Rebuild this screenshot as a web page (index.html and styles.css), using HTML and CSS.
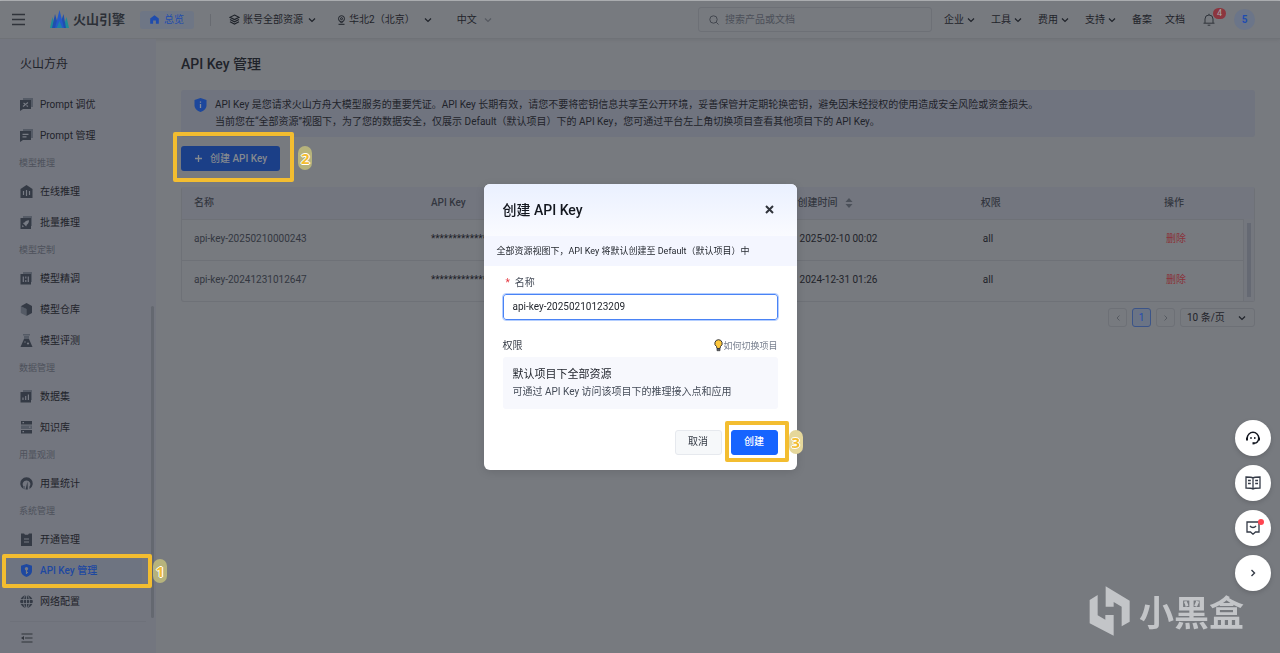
FILE: index.html
```html
<!DOCTYPE html>
<html lang="zh-CN">
<head>
<meta charset="utf-8">
<meta name="viewport" content="width=device-width, initial-scale=1">
<title>API Key 管理 - 火山方舟</title>
<link rel="stylesheet" href="styles.css">
</head>
<body>
<svg class="sprite" aria-hidden="true">
  <symbol id="down" viewBox="0 0 8 8"><path d="M1 2.500 4 5.500 7 2.500" fill="none" stroke="currentColor" stroke-width="1.200"/></symbol>
</svg>
<div class="app">
  <header class="topbar">
    <button class="icon-btn menu-btn" aria-label="菜单"><svg width="13" height="13" viewBox="0 0 13 13"><path d="M0 1.500h13M0 6.500h13M0 11.500h13" stroke="currentColor" stroke-width="1.300"/></svg></button>
    <a class="brand" href="#"><svg width="19" height="19" viewBox="0 0 19 19"><path d="M0 18 2.500 7l3 11z" fill="#1d8c98"/><path d="M13 18l3.500-11L19 18z" fill="#1d8c98"/><path d="M2 18 5 4l4 14z" fill="#1f4fae"/><path d="M9 18l4.500-14L16 18z" fill="#1f4fae"/><path d="M5 18 9.500 0 14 18z" fill="#2559c8"/><path d="M6.500 18l3-7 3 7z" fill="#1d7fa8"/></svg><span>火山引擎</span></a>
    <a class="overview" href="#"><svg width="9" height="9" viewBox="0 0 9 9"><path d="M4.500.2 8.800 3.600V8.800H5.900V5.500H3.100V8.800H.2V3.600z" fill="currentColor"/></svg>总览</a>
    <span class="sep"></span>
    <button class="drop scope"><svg width="11" height="11" viewBox="0 0 11 11" fill="none" stroke="currentColor" stroke-width="1.100"><path d="M5.500 1 10 3.300 5.500 5.600 1 3.300zM1 5.500l4.500 2.300L10 5.500M1 7.800l4.500 2.300L10 7.800"/></svg>账号全部资源<svg class="chev" width="8" height="8"><use href="#down"/></svg></button>
    <button class="drop region"><svg width="9" height="10" viewBox="0 0 9 10" fill="none" stroke="currentColor"><circle cx="4.500" cy="3.700" r="3"/><circle cx="4.500" cy="3.700" r="1"/><path d="M3 6.500l1.500 1.600L6 6.500M1.500 9.300h6"/></svg>华北2（北京）<svg class="chev" width="8" height="8"><use href="#down"/></svg></button>
    <button class="drop lang">中文<svg class="chev" width="8" height="8"><use href="#down"/></svg></button>
    <label class="search"><svg width="10" height="10" viewBox="0 0 10 10" fill="none" stroke="currentColor"><circle cx="4.500" cy="4.500" r="3.700"/><path d="M7.300 7.300 9.500 9.500"/></svg><input type="search" placeholder="搜索产品或文档" aria-label="搜索产品或文档"></label>
    <nav class="topnav" aria-label="顶部导航">
      <button class="drop">企业<svg width="8" height="8"><use href="#down"/></svg></button>
      <button class="drop">工具<svg width="8" height="8"><use href="#down"/></svg></button>
      <button class="drop">费用<svg width="8" height="8"><use href="#down"/></svg></button>
      <button class="drop">支持<svg width="8" height="8"><use href="#down"/></svg></button>
      <a href="#">备案</a>
      <a class="docs" href="#">文档</a>
    </nav>
    <button class="icon-btn bell" aria-label="消息"><svg width="12" height="13" viewBox="0 0 12 13" fill="none" stroke="currentColor"><path d="M.5 10.200h11M2 10V6a4 4 0 0 1 8 0v4M6 2V.8M4.700 12.200h2.600"/></svg><span class="count">4</span></button>
    <button class="avatar">5</button>
  </header>

  <div class="body">
    <aside class="sidebar">
      <h2 class="product">火山方舟</h2>
      <nav class="menu" aria-label="产品导航">
        <a class="item" href="#"><svg viewBox="0 0 13 13"><path class="soft" d="M3 0h10v9H3z"/><path d="M0 2h11v9H3l-3 2z"/><path class="cut" d="M3 8.500 8 4.500M3.500 5l1.500 1M6.500 7.500 8 8.500"/></svg>Prompt 调优</a>
        <a class="item" href="#"><svg viewBox="0 0 13 13"><path class="soft" d="M3 0h10v9H3z"/><path d="M0 2h11v9H3l-3 2z"/><path class="cut" d="M2.500 5.300h6M2.500 7.800h4"/></svg>Prompt 管理</a>
        <h3 class="group">模型推理</h3>
        <a class="item" href="#"><svg viewBox="0 0 13 13"><path d="M6.500 0 12.500 4v9H.5V4z"/><path class="cut" d="M3.500 6v4M6.500 5v6M9.500 6v4"/></svg>在线推理</a>
        <a class="item" href="#"><svg viewBox="0 0 13 13"><path class="soft" d="M3 0h9v10H3z"/><path d="M.5 2h10.500v11H.5z"/><path class="hole" d="M9 4.200c-2.500 0-4 1-4.500 2.300l-1.700.5 3.400 3.400.6-1.700C8.200 8 9 6.500 9 4.200zM2.500 9l1.500 1.500-2 .7z"/></svg>批量推理</a>
        <h3 class="group">模型定制</h3>
        <a class="item" href="#"><svg viewBox="0 0 13 13"><path class="soft" d="M3 0h9v10H3z"/><path d="M.5 2h10.500v10.500H.5z"/><path class="cut" d="M3.300 4.500v5.500M8.300 4.500v5.500M5.800 4.500v2M5.800 8v2"/></svg>模型精调</a>
        <a class="item" href="#"><svg viewBox="0 0 13 13"><path class="soft" d="M.8 3.200 6.500 6v7L.8 10z"/><path d="M6.500 0 12 3v7l-5.500 3V6L.8 3.200z"/></svg>模型仓库</a>
        <a class="item" href="#"><svg viewBox="0 0 13 13"><path class="soft" d="M3 0h7v1.500H3zM4 2h5v4H4z"/><path d="M4 5h5l3.500 8H.5z"/><circle class="hole" cx="8" cy="9.500" r="1.100"/><circle class="hole" cx="5" cy="8" r=".7"/></svg>模型评测</a>
        <h3 class="group">数据管理</h3>
        <a class="item" href="#"><svg viewBox="0 0 13 13"><path class="soft" d="M3 0h9v10H3z"/><path d="M.5 2h10.500v10.500H.5z"/><path class="cut" d="M3 7.500v2.500M5.700 6v4M8.400 4.500V10"/></svg>数据集</a>
        <a class="item" href="#"><svg viewBox="0 0 13 13"><path d="M1 0h11v3.500H1zM1 9h11v3.500H1z"/><path class="soft" d="M1 4.500h11V8H1z"/><path class="cut" d="M2.500 1.700h1.500M2.500 10.700h1.500M9 6.200h1.500"/></svg>知识库</a>
        <h3 class="group">用量观测</h3>
        <a class="item" href="#"><svg viewBox="0 0 13 13"><path d="M3.500 12V9.500A3.700 3.700 0 0 1 6.500 3.500 3.700 3.700 0 0 1 9.500 9.500V12A6.200 6.200 0 1 0 3.500 12z"/><path class="soft" d="M3 9h2v3.500L3 11.500z"/><path d="M5.500 12.500 7.500 4.500 7.800 12.500z"/></svg>用量统计</a>
        <h3 class="group">系统管理</h3>
        <a class="item" href="#"><svg viewBox="0 0 13 13"><path d="M1 .5h3l1 1.300h3L9 .5h3V13H1z"/><path class="cut" d="M4 6h5M4 9h5"/></svg>开通管理</a>
        <div class="callout">
          <a class="item active" href="#" aria-current="page"><svg viewBox="0 0 13 13"><path d="M6.500 0 12 1.700V7c0 3-2.500 5-5.500 6C3.500 12 1 10 1 7V1.700z"/><circle class="hole" cx="6.500" cy="4.800" r="1.700"/><path class="cut" d="M6.500 6v4M6.500 8.500H8"/></svg>API Key 管理</a>
          <span class="frame frame-nav"></span><b class="step step-nav">1</b>
        </div>
        <a class="item" href="#"><svg viewBox="0 0 13 13"><circle cx="6.500" cy="6.500" r="6.300"/><path class="cut thin" d="M0 4.500h13M0 8.500h13M6.500 0v13"/><ellipse class="cut thin" cx="6.500" cy="6.500" rx="3" ry="6.300"/></svg>网络配置</a>
      </nav>
      <span class="scrollbar"></span>
      <button class="icon-btn collapse" aria-label="收起导航"><svg width="12" height="10" viewBox="0 0 12 10"><path d="M.5 1h11M4 5h7.500M.5 9h11" stroke="currentColor"/><path d="M0 5 3 3v4z" fill="currentColor"/></svg></button>
    </aside>

    <main class="content">
      <h1>API Key 管理</h1>
      <section class="notice">
        <svg width="13" height="14" viewBox="0 0 13 14"><path d="M6.500 0 12.500 2v5.500c0 3-2.700 5.300-6 6.500-3.300-1.200-6-3.500-6-6.500V2z" fill="#1d479c"/><path d="M6.500 3.500v1.300M6.500 6v4" stroke="#838b9c" stroke-width="1.300"/></svg>
        <p>API Key 是您请求火山方舟大模型服务的重要凭证。API Key 长期有效，请您不要将密钥信息共享至公开环境，妥善保管并定期轮换密钥，避免因未经授权的使用造成安全风险或资金损失。<br>当前您在“全部资源”视图下，为了您的数据安全，仅展示 Default（默认项目）下的 API Key，您可通过平台左上角切换项目查看其他项目下的 API Key。</p>
      </section>
      <div class="callout toolbar">
        <button class="create"><svg width="9" height="9" viewBox="0 0 9 9"><path d="M4.500 1v7M1 4.500h7" stroke="currentColor" stroke-width="1.300"/></svg>创建 API Key</button>
        <span class="frame frame-create"></span><b class="step step-create">2</b>
      </div>
      <div class="table-wrap">
        <table>
          <colgroup><col class="c-name"><col class="c-key"><col class="c-mid"><col class="c-mid"><col></colgroup>
          <thead><tr><th>名称</th><th>API Key</th><th>创建时间<svg class="sort" width="8" height="10" viewBox="0 0 8 10"><path d="M4 0l3.500 4h-7zM4 10l3.500-4h-7z" fill="#4b5059"/></svg></th><th>权限</th><th>操作</th></tr></thead>
          <tbody>
            <tr><td>api-key-20250210000243</td><td class="strong">**************</td><td class="strong inset">2025-02-10 00:02</td><td class="strong inset">all</td><td class="inset"><a class="delete" href="#">删除</a></td></tr>
            <tr><td>api-key-20241231012647</td><td class="strong">**************</td><td class="strong inset">2024-12-31 01:26</td><td class="strong inset">all</td><td class="inset"><a class="delete" href="#">删除</a></td></tr>
          </tbody>
        </table>
        <span class="gutter"></span>
      </div>
      <nav class="pager" aria-label="分页">
        <button class="page" aria-label="上一页"><svg width="6" height="8" viewBox="0 0 6 8"><path d="M4.500 1.500 2 4l2.500 2.500" fill="none" stroke="currentColor"/></svg></button>
        <button class="page current" aria-current="page">1</button>
        <button class="page" aria-label="下一页"><svg width="6" height="8" viewBox="0 0 6 8"><path d="M1.500 1.500 4 4 1.500 6.500" fill="none" stroke="currentColor"/></svg></button>
        <span class="size"><select aria-label="每页条数"><option>10 条/页</option></select><svg width="8" height="8"><use href="#down"/></svg></span>
      </nav>
    </main>
  </div>
</div>

<div class="layer">
  <form class="modal" role="dialog" aria-labelledby="dlg-title">
    <header class="modal-head"><h2 id="dlg-title">创建 API Key</h2><button type="button" class="icon-btn close" aria-label="关闭"><svg width="9" height="9" viewBox="0 0 9 9"><path d="M1 1l7 7M8 1 1 8" stroke="currentColor" stroke-width="2"/></svg></button></header>
    <p class="hint">全部资源视图下，API Key 将默认创建至 Default（默认项目）中</p>
    <div class="modal-body">
      <label class="field-label" for="key-name"><span class="req">*</span>名称</label>
      <input class="key-name" id="key-name" type="text" value="api-key-20250210123209">
      <div class="perm-head"><span>权限</span><a href="#"><svg width="9" height="13" viewBox="0 0 9 13"><path d="M4.500.7a3.700 3.700 0 0 1 2 6.800L6 9.500H3L2.500 7.500a3.700 3.700 0 0 1 2-6.800z" fill="#ffc83d" stroke="#333"/><path d="M3 9.500h3v2.200H3z" fill="#58606c" stroke="#333" stroke-width=".7"/></svg>如何切换项目</a></div>
      <div class="perm"><strong>默认项目下全部资源</strong><span>可通过 API Key 访问该项目下的推理接入点和应用</span></div>
      <footer class="actions">
        <button type="button" class="btn">取消</button>
        <span class="callout"><button type="submit" class="btn primary">创建</button><span class="frame frame-submit"></span><b class="step step-submit">3</b></span>
      </footer>
    </div>
  </form>
</div>

<div class="floats">
  <button aria-label="客服"><svg width="16" height="16" viewBox="0 0 16 16" fill="none" stroke="#12161f" stroke-width="1.400"><path d="M2.300 9.500V8a5.700 5.700 0 0 1 11.400 0c0 3-1.700 5-4.700 5.300"/><path d="M2 7.500v3M14 7.500v3" stroke-width="2"/><path d="M7.500 13.300h2" stroke-width="2.200"/><path d="M6 7v2M9.800 7v2" stroke-width="1.300"/></svg></button>
  <button aria-label="文档"><svg width="16" height="14" viewBox="0 0 16 14" fill="none" stroke="#353b47" stroke-width="1.300"><path d="M8 2C6.500 1 3 1 1 1v11c3 0 6 0 7 1 1-1 4-1 7-1V1c-2 0-5.500 0-7 1zM8 2v11M3 4.500h2.800M3 7.500h2.800M10.200 4.500H13M10.200 7.500H13"/></svg></button>
  <button aria-label="反馈"><svg width="14" height="14" viewBox="0 0 14 14" fill="none" stroke="#353b47" stroke-width="1.300"><path d="M1 1h12v10H9.500L7 13.200 4.500 11H1z"/><path d="M4 5c1.500 2 4.500 2 6 0"/></svg><span class="dot"></span></button>
  <button aria-label="展开"><svg width="8" height="8" viewBox="0 0 8 8"><path d="M2.500 1 5.500 4 2.500 7" fill="none" stroke="#353b47" stroke-width="1.400"/></svg></button>
</div>
<div class="watermark"><svg width="42" height="50" viewBox="0 0 126 150"><path d="M2 42 26 27V88L49 101V87H74V149L2 112z"/><path d="M50 1 122 44V107L98 121V62L74 48V62H50z"/></svg><span>小黑盒</span></div>
</body>
</html>
```
FILE: styles.css
```css
:root {
  --page: #777a7f;
  --panel: #73767f;
  --line: #6e7177;
  --ink: #1f232a;
  --muted: #33373f;
  --faint: #4d515b;
  --blue: #1e48a0;
  --mark: #f3bd30;
}
* { box-sizing: border-box; }
body {
  margin: 0;
  background: var(--page);
  color: var(--ink);
  font: 10px/16px Roboto, "Noto Sans CJK SC", sans-serif;
}
h1, h2, h3, p { margin: 0; font-weight: 500; }
a { color: inherit; text-decoration: none; }
button, input, select { font: inherit; color: inherit; border: 0; padding: 0; margin: 0; background: none; }
svg { display: block; flex: none; }
.sprite { position: absolute; width: 0; height: 0; }
.app { min-height: 100vh; display: flex; flex-direction: column; border-top: 1px solid #b6b9bb; }

/* Top bar */
.topbar {
  height: 38px;
  flex: none;
  display: flex;
  align-items: center;
  padding: 0 25px 0 12px;
  border-bottom: 1px solid #6f7277;
  box-shadow: 0 1px 3px #6f7277;
  white-space: nowrap;
}
.icon-btn { display: flex; color: #30343b; }
.brand { display: flex; align-items: center; gap: 4px; margin-left: 25px; font-size: 13px; font-weight: 700; color: #2c3037; }
.overview { display: flex; align-items: center; gap: 5px; margin-left: 15px; padding: 0 10px; height: 18px; border-radius: 3px; background: #6e7685; color: #1f4cad; }
.sep { width: 1px; height: 12px; margin: 0 18px 0 16px; background: #686b71; }
.drop { display: flex; align-items: center; gap: 3px; }
.region { margin-left: 21px; }
.scope .chev { margin-left: 2px; }
.region .chev { margin-left: 6px; }
.lang { margin-left: 25px; }
.lang .chev { margin-left: 4px; color: #565a61; }
.search { display: flex; align-items: center; gap: 6px; width: 234px; height: 25px; margin-left: auto; padding: 0 10px; border: 1px solid #6d7076; border-radius: 3px; color: #43474f; }
.search input { flex: 1; min-width: 0; outline: 0; }
.search input::placeholder { color: #4c5059; opacity: 1; }
.topnav { display: flex; align-items: center; gap: 16px; margin-left: 12px; }
.topnav .docs { margin-left: -3px; }
.bell { position: relative; margin-left: 18px; }
.count { position: absolute; left: 10px; top: -5px; width: 13px; height: 11px; border-radius: 6px; background: #8c363f; color: #a5a7aa; font-size: 9px; line-height: 11px; text-align: center; }
.avatar { width: 21px; height: 21px; margin-left: 19px; border-radius: 50%; background: #6b7589; color: #1e4cb0; font-weight: 700; }

/* Side navigation */
.body { flex: 1; display: flex; }
.sidebar { position: relative; flex: none; width: 156px; background: var(--panel); display: flex; flex-direction: column; }
.product { padding: 17px 20px; font-size: 12px; font-weight: 400; }
.item { display: flex; align-items: center; gap: 7px; height: 31px; padding-left: 20px; }
.item svg { width: 13px; height: 13px; fill: #343a45; }
.item .soft { fill: #555b66; }
.item .cut { fill: none; stroke: #777b84; stroke-width: 1.2; }
.item .thin { stroke-width: 0.8; }
.item .hole { fill: #777b84; }
.item.active { color: var(--blue); font-weight: 500; background: #6e7481; margin-right: 14px; }
.item.active svg { fill: var(--blue); }
.group { height: 25px; padding-left: 19px; font-size: 9px; line-height: 25px; font-weight: 400; color: var(--faint); }
.scrollbar { position: absolute; right: 2px; top: 267px; bottom: 36px; width: 3px; border-radius: 2px; background: #646870; }
.collapse { align-items: center; margin: 4px 10px 0; padding: 11px; border-top: 1px solid #6e717a; }

/* Content */
.content { flex: 1; min-width: 0; padding: 15px 25px; }
h1 { font-size: 14px; line-height: 20px; }
.notice { display: flex; gap: 8px; margin-top: 16px; padding: 6px 13px 7px; background: #70747f; border-radius: 3px; }
.notice svg { margin-top: 2px; }
.notice p { line-height: 17px; font-weight: 400; }
.toolbar { margin-top: 9px; }
.create { display: flex; align-items: center; justify-content: center; gap: 7px; height: 25px; padding: 0 13px; border-radius: 3px; background: #1b3f87; color: #84898f; font-weight: 500; }
.table-wrap { position: relative; margin-top: 16px; border: 1px solid var(--line); border-width: 0 1px 1px; border-radius: 3px; }
table { width: 100%; border-collapse: collapse; table-layout: fixed; }
.c-name { width: 22.1%; }
.c-key { width: 34.2%; }
.c-mid { width: 17.1%; }
th, td { padding: 0 12px; text-align: left; white-space: nowrap; overflow: hidden; color: var(--muted); }
th { height: 32px; background: var(--panel); font-weight: 500; }
td { height: 41px; padding-bottom: 2px; border-top: 1px solid var(--line); }
td.strong { color: var(--ink); }
td.inset { padding-left: 14px; }
.sort { display: inline-block; margin-left: 7px; vertical-align: middle; }
.delete { color: #8a323a; }
.gutter { position: absolute; right: 0; top: 32px; bottom: 0; width: 11px; border-left: 1px solid var(--line); background: linear-gradient(#656973, #656973) center / 4px 74px no-repeat, #74777e; }
.pager { display: flex; justify-content: flex-end; gap: 5px; margin-top: 6px; }
.page { display: flex; align-items: center; justify-content: center; width: 19px; height: 19px; border: 1px solid #6d7076; border-radius: 3px; color: #565a61; }
.page.current { border-color: #3b5488; background: #6b7485; color: #1e4cb0; }
.size { position: relative; width: 75px; height: 19px; border: 1px solid #6d7076; border-radius: 3px; }
.size select { appearance: none; width: 100%; height: 100%; padding-left: 6px; }
.size svg { position: absolute; right: 8px; top: 5px; pointer-events: none; }

/* Numbered callouts */
.callout { position: relative; width: max-content; }
.menu .callout { width: auto; }
.frame { position: absolute; z-index: 2; border: 4px solid var(--mark); border-radius: 2px; pointer-events: none; }
.frame-nav { left: 2px; right: 4px; top: -1px; bottom: -2px; }
.frame-create { inset: -14px -14px -11px -8px; }
.frame-submit { inset: -9px -11px -7px -6px; }
.step { position: absolute; z-index: 3; width: 14px; height: 24px; border-radius: 7px; background: #b6b37c; color: var(--mark); font: 700 15px/24px "Open Sans", sans-serif; text-align: center; text-shadow: 1px 0 #fff, -1px 0 #fff, 0 1px #fff, 0 -1px #fff; }
.step-nav { right: -11px; top: 4px; }
.step-create { right: -32px; top: 0; }
.step-submit { right: -25px; top: 0; background: #e5d79a; }

/* Dialog */
.layer { position: fixed; inset: 0; z-index: 5; display: flex; align-items: center; justify-content: center; }
.modal { width: 313px; border-radius: 6px; background: #fff; box-shadow: 0 2px 10px rgba(0, 0, 0, .12); }
.modal-head { display: flex; align-items: center; justify-content: space-between; height: 52px; padding: 0 23px 0 19px; border-radius: 6px 6px 0 0; background: linear-gradient(#eaf0ff, #fafbff); }
.modal-head h2 { font-size: 14px; color: #13171f; }
.hint { padding: 7px 13px; background: #f4f6ff; font-size: 9px; font-weight: 400; }
.modal-body { padding: 9px 19px 15px; }
.field-label { display: flex; gap: 5px; padding-left: 3px; color: #454c58; }
.req { color: #e5363f; }
.key-name { display: block; width: 100%; height: 26px; margin-top: 3px; padding: 0 9px; border: 1px solid #4a83f5; border-radius: 3px; outline: 1px solid #b4ceff; background: #fff; }
.perm-head { display: flex; justify-content: space-between; align-items: center; margin-top: 18px; color: #353b46; }
.perm-head a { display: flex; align-items: center; font-size: 9px; color: #777f8e; }
.perm { display: flex; flex-direction: column; margin-top: 3px; padding: 8px 10px 9px; border-radius: 3px; background: #f7f8fd; color: #454c58; }
.perm strong { font-size: 11px; line-height: 19px; font-weight: 400; color: #1c2028; }
.actions { display: flex; justify-content: flex-end; gap: 9px; margin-top: 21px; }
.btn { display: block; min-width: 47px; height: 25px; border: 1px solid #e6e9ee; border-radius: 3px; background: #f6f8fa; color: #353b46; }
.btn.primary { border-color: #1664ff; background: #1664ff; color: #fff; font-weight: 500; }

/* Floating shortcuts */
.floats { position: fixed; right: 9px; bottom: 62px; z-index: 6; display: flex; flex-direction: column; gap: 9px; }
.floats button { position: relative; display: flex; align-items: center; justify-content: center; width: 36px; height: 36px; border-radius: 50%; background: #fff; box-shadow: 0 2px 5px rgba(0, 0, 0, .15); }
.dot { position: absolute; right: 7px; top: 9px; width: 6px; height: 6px; border-radius: 50%; background: #ff4550; }
.watermark { position: fixed; right: 36px; bottom: 17px; z-index: 6; display: flex; align-items: center; gap: 8px; color: #c3c5c8; font: 700 35px/50px "Noto Sans CJK SC", sans-serif; }
.watermark svg { fill: currentColor; }
```
